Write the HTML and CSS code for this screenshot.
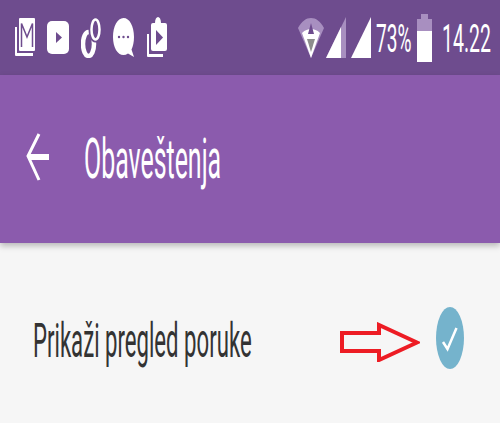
FILE: index.html
```html
<!DOCTYPE html>
<html lang="en">
<head>
    <meta charset="UTF-8">
    <meta name="viewport" content="width=device-width, initial-scale=1.0">
    <title>Obaveštenja</title>
    <link rel="stylesheet" href="styles.css">
</head>
<body>
<div class="status-bar">
    <div class="status-left">
        <svg class="icon-mail" width="20" height="40" viewBox="0 0 20 40">
            <path d="M0 9h2v26h16v3H1a1 1 0 0 1-1-1z" fill="#fff"/>
            <rect x="4" y="0" width="16" height="33" rx="1" fill="#fff"/>
            <path d="M6.500 29V5.500L12 19l5.500-13.500V29" fill="none" stroke="#6e4c8e" stroke-width="1.500"/>
        </svg>
        <svg class="icon-play" width="22" height="33" viewBox="0 0 22 33">
            <rect width="22" height="33" rx="5" fill="#fff"/>
            <path d="M9 11l6 5.500-6 5.500z" fill="#6e4c8e"/>
        </svg>
        <svg class="icon-rings" width="20" height="41" viewBox="0 0 20 41">
            <ellipse cx="7.500" cy="27" rx="5.500" ry="12" fill="none" stroke="#fff" stroke-width="4.500"/>
            <ellipse cx="14.500" cy="12.500" rx="4" ry="10" fill="#6e4c8e" stroke="#6e4c8e" stroke-width="6"/>
            <ellipse cx="14.500" cy="12.500" rx="4" ry="10" fill="none" stroke="#fff" stroke-width="2.500"/>
        </svg>
        <svg class="icon-chat" width="22" height="40" viewBox="0 0 22 40">
            <path d="M10.500 0C16.500 0 21 8 21 19c0 5-1 9.500-2.500 12.500L21 39l-6-3.500c-1.500 1-3 1.500-4.500 1.500C4.500 37 0 29.500 0 19S4.500 0 10.500 0z" fill="#fff"/>
            <circle cx="6" cy="19" r="1.200" fill="#6e4c8e"/>
            <circle cx="10.500" cy="19" r="1.200" fill="#6e4c8e"/>
            <circle cx="15" cy="19" r="1.200" fill="#6e4c8e"/>
        </svg>
        <svg class="icon-store" width="20" height="41" viewBox="0 0 20 41">
            <path d="M0 17h2v20h14v3H1a1 1 0 0 1-1-1z" fill="#fff"/>
            <path d="M8 6c0-8 6-8 6 0h4a2 2 0 0 1 2 2v24a2 2 0 0 1-2 2H6a2 2 0 0 1-2-2V8a2 2 0 0 1 2-2z" fill="#fff"/>
            <path d="M9 13l7 7.500-7 7.500z" fill="#6e4c8e"/>
        </svg>
    </div>
    <div class="status-right">
        <svg class="icon-wifi" width="26" height="42" viewBox="0 0 26 42">
            <path d="M0 11C4 4 8 1 13 1s9 3 13 10L13 41z" fill="#a88fc0"/>
            <path d="M4 16c3-3 6-4 9-4s6 1 9 4L13 41z" fill="#fff"/>
            <path d="M13 6l3 11h-6z" fill="#6e4c8e"/>
            <path d="M9 22h8l-4 13z" fill="#8d8d8d"/>
        </svg>
        <svg class="icon-signal" width="20" height="42" viewBox="0 0 20 42">
            <path d="M20 0v41H0z" fill="#a88fc0"/>
            <path d="M15 10v31H0z" fill="#fff"/>
        </svg>
        <svg class="icon-signal" width="20" height="42" viewBox="0 0 20 42">
            <path d="M20 0v41H0z" fill="#fff"/>
        </svg>
        <span class="battery-text"><span class="squeeze">73%</span></span>
        <div class="battery">
            <div class="battery-cap"></div>
            <div class="battery-body"><div class="battery-level"></div></div>
        </div>
        <span class="clock"><span class="squeeze">14.22</span></span>
    </div>
</div>

<div class="toolbar">
    <svg class="back-arrow" width="24" height="48" viewBox="0 0 24 48">
        <path d="M13 1L2 23l11 24" fill="none" stroke="#fff" stroke-width="3"/>
        <path d="M3 21h20v6H3z" fill="#fff"/>
    </svg>
    <h1 class="title"><span class="squeeze">Obaveštenja</span></h1>
</div>

<div class="content">
    <div class="setting-row">
        <span class="setting-label"><span class="squeeze">Prikaži pregled poruke</span></span>
        <svg class="red-arrow" width="80" height="40" viewBox="0 0 80 40">
            <path d="M2 11h37V3l38 17.500L39 38v-9H2z" fill="none" stroke="#ed1c24" stroke-width="4"/>
        </svg>
        <svg class="checkbox" width="28" height="62" viewBox="0 0 28 62">
            <ellipse cx="14" cy="31" rx="14" ry="31" fill="#75b3cc"/>
            <path d="M7 35l4.500 7L20.500 21" fill="none" stroke="#fff" stroke-width="2.500"/>
        </svg>
    </div>
</div>
</body>
</html>
```

FILE: styles.css
```css
/* General Styles */
html, body {
    margin: 0;
    padding: 0;
    height: 423px;
    overflow: hidden;
}

body {
    font-family: 'Roboto', 'Liberation Sans', sans-serif;
    background: #f6f6f6;
    color: #333;
}

/* The whole screenshot is squeezed sideways, text too */
.squeeze {
    display: inline-block;
    white-space: nowrap;
    transform-origin: left center;
}

/* Status Bar */
.status-bar {
    display: flex;
    justify-content: space-between;
    align-items: center;
    height: 75px;
    padding: 0 9px 0 15px;
    background: #6e4c8e;
    color: #fff;
}

.status-left, .status-right {
    display: flex;
    align-items: center;
}

.status-left {
    gap: 12px;
}

.status-left svg, .status-right svg {
    display: block;
}

.icon-wifi {
    margin-right: 2px;
}

.icon-signal {
    margin-right: 5px;
}

.battery-text, .clock {
    display: block;
    height: 46px;
    font-size: 20px;
    line-height: 46px;
}

.battery-text {
    width: 41px;
}

.battery-text .squeeze {
    transform: scale(0.956, 1.95);
}

.clock {
    width: 49px;
    margin-left: 10px;
}

.clock .squeeze {
    transform: scale(0.975, 1.95);
}

.battery {
    display: flex;
    flex-direction: column;
    align-items: center;
    width: 15px;
}

.battery-cap {
    width: 7px;
    height: 5px;
    background: #a88fc0;
}

.battery-body {
    display: flex;
    align-items: flex-end;
    width: 15px;
    height: 43px;
    background: #a88fc0;
}

.battery-level {
    width: 100%;
    height: 31px;
    background: #fff;
}

/* Toolbar */
.toolbar {
    display: flex;
    align-items: center;
    height: 168px;
    padding: 0 0 0 26px;
    background: #8b5bad;
    box-shadow: 0 3px 6px rgba(0, 0, 0, 0.25);
    color: #fff;
}

.back-arrow {
    margin-top: -4px;
}

.title {
    width: 140px;
    margin: 0 0 0 34px;
    font-size: 56px;
    font-weight: 400;
    line-height: 64px;
}

.title .squeeze {
    transform: scaleX(0.445);
}

/* Settings */
.setting-row {
    display: flex;
    align-items: center;
    height: 190px;
    padding: 0 36px 0 33px;
}

.setting-label {
    flex: 1;
    width: 0;
    margin-top: 6px;
    font-size: 40px;
    line-height: 54px;
    color: #333;
}

.setting-label .squeeze {
    transform: scale(0.554, 1.2);
}

.red-arrow {
    margin: 8px 16px 0 0;
}
```
